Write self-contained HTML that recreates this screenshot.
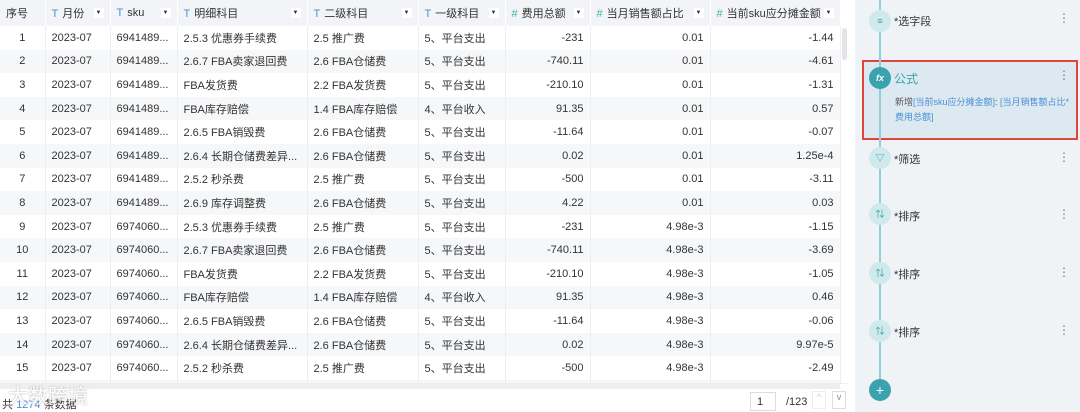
<!DOCTYPE html><html><head><meta charset="utf-8"><style>
*{box-sizing:border-box;margin:0;padding:0}
body{width:1080px;height:412px;overflow:hidden;background:#fff;font-family:"Liberation Sans","Noto Sans CJK SC",sans-serif;font-size:11px;color:#333;position:relative}
table{border-collapse:collapse;position:absolute;left:0;top:0;table-layout:fixed;width:840px}
td,th{height:23.6px;border-right:1px solid #eceef1;white-space:nowrap;overflow:hidden;padding:0 6px;font-weight:normal}
th{height:26px;background:#f2f4f7;text-align:left;color:#333;border-right:1px solid #fff;position:relative}
th .t{color:#4a8fd6;margin-right:4px}th .h{color:#3fb3a8;margin-right:4px}
th .dd{position:absolute;right:6px;top:8px;width:10px;height:10px;background:#fff;font-size:6px;line-height:10px;text-align:center}
tr:nth-child(odd) td{background:#f6f7f9}
.c{text-align:center}.r{text-align:right}
#rp{position:absolute;left:855px;top:0;width:225px;height:412px;background:#f0f3f6}
.line{position:absolute;left:879px;top:0;width:2px;height:385px;background:#8fd0d6}
.node{position:absolute;left:869px;width:22px;height:22px;border-radius:50%;background:#cfe9ec;color:#3a9fab;font-size:9px;text-align:center;line-height:22px}
.lbl{position:absolute;left:894px;font-size:11px;color:#333}
.dots{position:absolute;left:1058px;color:#777;font-size:12px;line-height:4px;width:4px}
</style></head><body>
<table>
<colgroup><col style="width:45px"><col style="width:65px"><col style="width:67px"><col style="width:130px"><col style="width:111px"><col style="width:87px"><col style="width:85px"><col style="width:120px"><col style="width:130px"></colgroup>
<tr><th>序号</th><th><span class="t">T</span>月份<span class="dd">▼</span></th><th><span class="t">T</span>sku<span class="dd">▼</span></th><th><span class="t">T</span>明细科目<span class="dd">▼</span></th><th><span class="t">T</span>二级科目<span class="dd">▼</span></th><th><span class="t">T</span>一级科目<span class="dd">▼</span></th><th><span class="h">#</span>费用总额<span class="dd">▼</span></th><th><span class="h">#</span>当月销售额占比<span class="dd">▼</span></th><th><span class="h">#</span>当前sku应分摊金额<span class="dd">▼</span></th></tr>
<tr><td class="c">1</td><td>2023-07</td><td>6941489...</td><td>2.5.3 优惠券手续费</td><td>2.5 推广费</td><td>5、平台支出</td><td class="r">-231</td><td class="r">0.01</td><td class="r">-1.44</td></tr>
<tr><td class="c">2</td><td>2023-07</td><td>6941489...</td><td>2.6.7 FBA卖家退回费</td><td>2.6 FBA仓储费</td><td>5、平台支出</td><td class="r">-740.11</td><td class="r">0.01</td><td class="r">-4.61</td></tr>
<tr><td class="c">3</td><td>2023-07</td><td>6941489...</td><td>FBA发货费</td><td>2.2 FBA发货费</td><td>5、平台支出</td><td class="r">-210.10</td><td class="r">0.01</td><td class="r">-1.31</td></tr>
<tr><td class="c">4</td><td>2023-07</td><td>6941489...</td><td>FBA库存赔偿</td><td>1.4 FBA库存赔偿</td><td>4、平台收入</td><td class="r">91.35</td><td class="r">0.01</td><td class="r">0.57</td></tr>
<tr><td class="c">5</td><td>2023-07</td><td>6941489...</td><td>2.6.5 FBA销毁费</td><td>2.6 FBA仓储费</td><td>5、平台支出</td><td class="r">-11.64</td><td class="r">0.01</td><td class="r">-0.07</td></tr>
<tr><td class="c">6</td><td>2023-07</td><td>6941489...</td><td>2.6.4 长期仓储费差异...</td><td>2.6 FBA仓储费</td><td>5、平台支出</td><td class="r">0.02</td><td class="r">0.01</td><td class="r">1.25e-4</td></tr>
<tr><td class="c">7</td><td>2023-07</td><td>6941489...</td><td>2.5.2 秒杀费</td><td>2.5 推广费</td><td>5、平台支出</td><td class="r">-500</td><td class="r">0.01</td><td class="r">-3.11</td></tr>
<tr><td class="c">8</td><td>2023-07</td><td>6941489...</td><td>2.6.9 库存调整费</td><td>2.6 FBA仓储费</td><td>5、平台支出</td><td class="r">4.22</td><td class="r">0.01</td><td class="r">0.03</td></tr>
<tr><td class="c">9</td><td>2023-07</td><td>6974060...</td><td>2.5.3 优惠券手续费</td><td>2.5 推广费</td><td>5、平台支出</td><td class="r">-231</td><td class="r">4.98e-3</td><td class="r">-1.15</td></tr>
<tr><td class="c">10</td><td>2023-07</td><td>6974060...</td><td>2.6.7 FBA卖家退回费</td><td>2.6 FBA仓储费</td><td>5、平台支出</td><td class="r">-740.11</td><td class="r">4.98e-3</td><td class="r">-3.69</td></tr>
<tr><td class="c">11</td><td>2023-07</td><td>6974060...</td><td>FBA发货费</td><td>2.2 FBA发货费</td><td>5、平台支出</td><td class="r">-210.10</td><td class="r">4.98e-3</td><td class="r">-1.05</td></tr>
<tr><td class="c">12</td><td>2023-07</td><td>6974060...</td><td>FBA库存赔偿</td><td>1.4 FBA库存赔偿</td><td>4、平台收入</td><td class="r">91.35</td><td class="r">4.98e-3</td><td class="r">0.46</td></tr>
<tr><td class="c">13</td><td>2023-07</td><td>6974060...</td><td>2.6.5 FBA销毁费</td><td>2.6 FBA仓储费</td><td>5、平台支出</td><td class="r">-11.64</td><td class="r">4.98e-3</td><td class="r">-0.06</td></tr>
<tr><td class="c">14</td><td>2023-07</td><td>6974060...</td><td>2.6.4 长期仓储费差异...</td><td>2.6 FBA仓储费</td><td>5、平台支出</td><td class="r">0.02</td><td class="r">4.98e-3</td><td class="r">9.97e-5</td></tr>
<tr><td class="c">15</td><td>2023-07</td><td>6974060...</td><td>2.5.2 秒杀费</td><td>2.5 推广费</td><td>5、平台支出</td><td class="r">-500</td><td class="r">4.98e-3</td><td class="r">-2.49</td></tr>
<tr><td class="c">16</td><td>2023-07</td><td>6974060...</td><td>2.6.9 库存调整费</td><td>2.6 FBA仓储费</td><td>5、平台支出</td><td class="r">4.22</td><td class="r">4.98e-3</td><td class="r">0.02</td></tr>
</table>
<div style="position:absolute;left:842px;top:28px;width:5px;height:32px;background:#e2e4e7;border-radius:3px"></div>
<div style="position:absolute;left:0;top:383px;width:848px;height:29px;background:#fff;border-top:1px solid #eee"></div>
<div style="position:absolute;left:0;top:384px;width:840px;height:5px;background:#eceef1"></div>
<div style="position:absolute;left:2px;top:396px;font-size:11px;color:#333">共 <span style="color:#4a8fd6">1274</span> 条数据</div>
<div style="position:absolute;left:8px;top:380px;font-size:20px;color:#fff;text-shadow:0 0 2px #999;opacity:.8">大数跨境</div>
<div style="position:absolute;left:750px;top:392px;width:26px;height:19px;border:1px solid #ddd;font-size:11px;padding:3px 6px">1</div>
<div style="position:absolute;left:786px;top:396px;font-size:11px">/123</div>
<div style="position:absolute;left:812px;top:391px;width:14px;height:18px;border:1px solid #eee;color:#ccc;font-size:9px;text-align:center">^</div>
<div style="position:absolute;left:832px;top:391px;width:14px;height:18px;border:1px solid #ddd;color:#888;font-size:9px;text-align:center">v</div>
<div id="rp"></div>
<div style="position:absolute;left:862px;top:60px;width:216px;height:80px;background:#dde9f0;border:2px solid #e0473a"></div>
<div class="line"></div>
<div class="node" style="top:10px">≡</div><div class="lbl" style="top:13px">*选字段</div><div class="dots" style="top:16px">⋮</div>
<div class="node" style="top:67px;background:#3aa3ad;color:#fff;font-style:italic;font-weight:bold">fx</div><div class="lbl" style="top:70px;color:#3aa3ad;font-size:12px">公式</div><div class="dots" style="top:73px">⋮</div>
<div style="position:absolute;left:895px;top:95px;font-size:9px;line-height:15px;color:#555;width:180px">新增<span style="color:#4a8fd6">[当前sku应分摊金额]</span>: <span style="color:#4a8fd6">[当月销售额占比*费用总额]</span></div>
<div class="node" style="top:147px">▽</div><div class="lbl" style="top:151px">*筛选</div><div class="dots" style="top:155px">⋮</div>
<div class="node" style="top:203px">⇅</div><div class="lbl" style="top:208px">*排序</div><div class="dots" style="top:212px">⋮</div>
<div class="node" style="top:262px">⇅</div><div class="lbl" style="top:266px">*排序</div><div class="dots" style="top:270px">⋮</div>
<div class="node" style="top:320px">⇅</div><div class="lbl" style="top:324px">*排序</div><div class="dots" style="top:328px">⋮</div>
<div style="position:absolute;left:869px;top:379px;width:22px;height:22px;border-radius:50%;background:#3aa3ad;color:#fff;text-align:center;line-height:22px;font-size:14px">+</div>
</body></html>
